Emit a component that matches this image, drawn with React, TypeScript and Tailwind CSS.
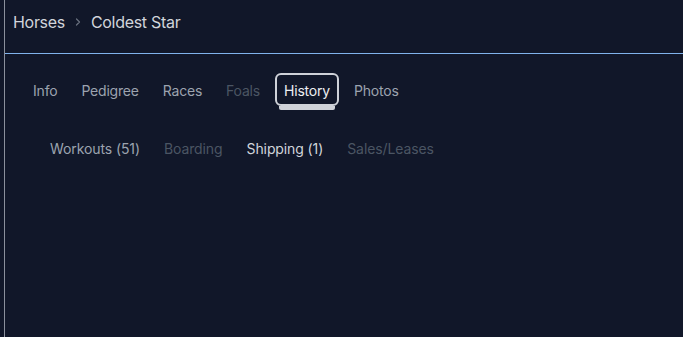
import React from "react";

const tabs = [
  { label: "Info", cls: "text-[#9ca3af]" },
  { label: "Pedigree", cls: "text-[#9ca3af]" },
  { label: "Races", cls: "text-[#9ca3af]" },
  { label: "Foals", cls: "text-[#4b5563]" },
  { label: "History", cls: "text-[#eceef1]", active: true },
  { label: "Photos", cls: "text-[#9ca3af]" },
];

const subTabs = [
  { label: "Workouts (51)", cls: "text-[#9ca3af]" },
  { label: "Boarding", cls: "text-[#4b5563]" },
  { label: "Shipping (1)", cls: "text-[#d1d5db]" },
  { label: "Sales/Leases", cls: "text-[#4b5563]" },
];

export default function App() {
  return (
    <div
      className="w-[683px] h-[337px] bg-[#111729] flex overflow-hidden"
      style={{ fontFamily: "Inter, 'Liberation Sans', sans-serif" }}
    >
      <div className="ml-[4px] flex-1 border-l border-[#8b909c] flex flex-col">
        <header className="h-[54px] border-b border-[#80b2ec] flex items-start pt-[12px] pl-[8px]">
          <div className="flex items-center h-[20px] text-[16px] tracking-[-0.3px] text-[#d1d5db]">
            <span>Horses</span>
            <svg width="8" height="10" viewBox="0 0 8 10" className="mx-[9px]">
              <path d="M2.5 2 L5.5 5 L2.5 8" fill="none" stroke="#6b7280" strokeWidth="1.2" strokeLinecap="round" strokeLinejoin="round" />
            </svg>
            <span>Coldest Star</span>
          </div>
        </header>
        <nav className="mt-[19px] pl-[19px] flex items-center gap-[6px]">
          {tabs.map((t) => (
            <div
              key={t.label}
              className={`relative h-[33px] px-[7px] pt-[1px] flex items-center rounded-[6px] border-2 text-[14px] tracking-[-0.2px] ${
                t.active ? "border-[#cfd2d8]" : "border-transparent"
              } ${t.cls}`}
            >
              {t.label}
              {t.active && (
                <span className="absolute left-[2px] right-[2px] top-[31px] h-[4px] bg-[#cfd2d8] rounded-b-[2px]" />
              )}
            </div>
          ))}
        </nav>
        <div className="mt-[32px] pl-[45px] flex items-center gap-[24px] h-[20px] text-[14px] tracking-[-0.1px]">
          {subTabs.map((s) => (
            <span key={s.label} className={s.cls}>
              {s.label}
            </span>
          ))}
        </div>
      </div>
    </div>
  );
}
